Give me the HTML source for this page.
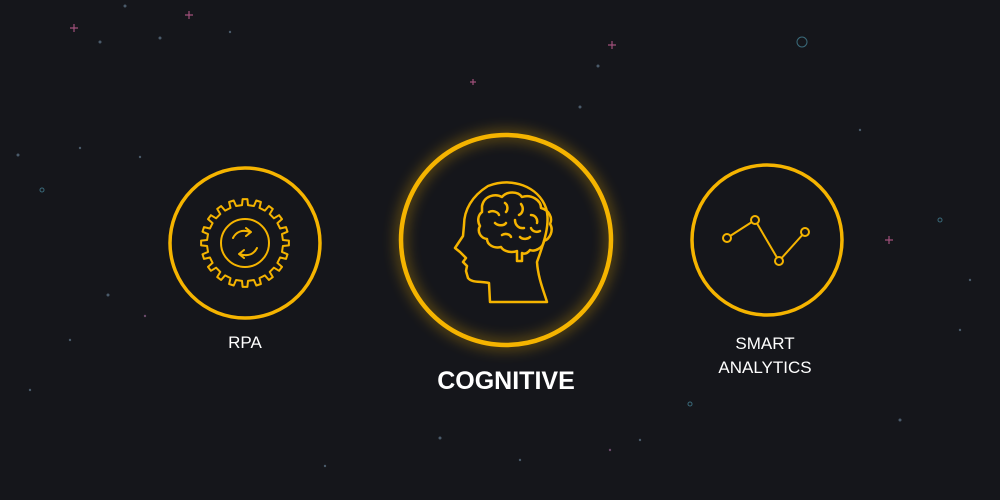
<!DOCTYPE html>
<html><head><style>
body{margin:0;width:1000px;height:500px;background:#15161b;overflow:hidden;position:relative;font-family:"Liberation Sans",sans-serif}
.t{position:absolute;color:#fff;text-align:center}
</style></head><body>
<svg width="1000" height="500" style="position:absolute;left:0;top:0">
<defs>
<filter id="b" x="-30%" y="-30%" width="160%" height="160%"><feGaussianBlur stdDeviation="7"/></filter>
</defs>
<g fill="#4a5a6a">
<circle cx="100" cy="42" r="1.5"/><circle cx="160" cy="38" r="1.5"/><circle cx="18" cy="155" r="1.5"/><circle cx="42" cy="190" r="2" fill="none" stroke="#3a6a7a"/><circle cx="80" cy="148" r="1.2"/><circle cx="140" cy="157" r="1.2"/><circle cx="108" cy="295" r="1.5"/><circle cx="145" cy="316" r="1.2" fill="#6a4a6a"/><circle cx="70" cy="340" r="1.2"/><circle cx="30" cy="390" r="1.2"/><circle cx="440" cy="438" r="1.5"/><circle cx="325" cy="466" r="1.2"/><circle cx="580" cy="107" r="1.5"/><circle cx="598" cy="66" r="1.5"/><circle cx="802" cy="42" r="5" fill="none" stroke="#3a6a7a"/><circle cx="940" cy="220" r="2" fill="none" stroke="#3a6a7a"/><circle cx="960" cy="330" r="1.2"/><circle cx="900" cy="420" r="1.5"/><circle cx="690" cy="404" r="2" fill="none" stroke="#3a6a7a"/><circle cx="640" cy="440" r="1.2"/><circle cx="520" cy="460" r="1.2"/><circle cx="230" cy="32" r="1.2"/><circle cx="970" cy="280" r="1.2"/><circle cx="860" cy="130" r="1.2"/><circle cx="610" cy="450" r="1.2" fill="#6a4a6a"/><circle cx="125" cy="6" r="1.5"/>
</g>
<g stroke="#a0507a" stroke-width="1.2"><path d="M70 28h8M74 24v8M185 15h8M189 11v8M608 45h8M612 41v8M885 240h8M889 236v8M470 82h6M473 79v6"/></g>
<circle cx="506" cy="240" r="105" fill="none" stroke="#f5b400" stroke-width="8" opacity="0.45" filter="url(#b)"/>
<g fill="none" stroke="#f5b400" stroke-linejoin="round" stroke-linecap="round">
<circle cx="245" cy="243" r="75" stroke-width="3.5"/>
<circle cx="506" cy="240" r="105" stroke-width="4.5"/>
<circle cx="767" cy="240" r="75" stroke-width="3.5"/>
<g stroke-width="2">
<path id="gear"/>
<circle cx="245" cy="243" r="24"/>
<path d="M233 238c3-6 9-9 17-6M246 228l5 4-5 4M257 248c-3 6-9 9-17 6M244 258l-5-4 5-4"/>
</g>
<g stroke-width="2.5">
<path d="M490 302L489 283C480 281 472 283 468 278L466 271 467 266 463 262 466 258 460 252 455 248 463 236 464 225C464 210 472 196 488 186 512 177 538 186 546 208 551 224 543 245 537 262 538 278 544 292 547 302Z"/>
<path d="M482 206c2-10 13-13 20-9 5-6 16-6 20 0 9-3 19 3 19 11 8 2 12 10 9 16 4 6 0 15-6 17-1 7-9 11-14 9-3 4-6 4-8 3v8h-5v-10c-5 2-13 1-16-4-8 2-14-3-14-8-7-1-10-8-7-13-3-5-2-11 2-14z"/>
<path d="M489 212c4-2 9 0 10 3M505 203c3 2 3 7 1 9M521 204c3 4 2 9-2 11M531 215c4 0 7 4 6 8M495 223c3 3 9 3 11 0M515 220c0 5 4 9 9 8M540 231c-4 2-8 0-9-3M502 235c3-2 8-1 9 2M520 237c3 3 8 2 10 0"/>
</g>
<g stroke-width="2">
<path d="M727 238L755 220 779 261 805 232"/>
<circle cx="727" cy="238" r="4" fill="#15161b"/><circle cx="755" cy="220" r="4" fill="#15161b"/><circle cx="779" cy="261" r="4" fill="#15161b"/><circle cx="805" cy="232" r="4" fill="#15161b"/>
</g>
</g>
</svg>
<script>
(function(){var cx=245,cy=243,n=20,ro=44,ri=38,d="";for(var i=0;i<n;i++){var a=i*2*Math.PI/n,w=Math.PI/n;var pts=[[ri,a-w*0.5],[ro,a-w*0.35],[ro,a+w*0.35],[ri,a+w*0.5],[ri,a+w*1.5]];pts.forEach(function(p,j){var x=cx+p[0]*Math.cos(p[1]),y=cy+p[0]*Math.sin(p[1]);d+=(i==0&&j==0?"M":"L")+x.toFixed(1)+" "+y.toFixed(1)+" ";});}document.getElementById("gear").setAttribute("d",d+"Z");})();
</script>
<div class="t" style="left:195px;top:333px;width:100px;font-size:17px">RPA</div>
<div class="t" style="left:400px;top:367px;width:212px;font-size:25px;font-weight:bold">COGNITIVE</div>
<div class="t" style="left:680px;top:332px;width:170px;font-size:17px;line-height:24px">SMART<br>ANALYTICS</div>
</body></html>
